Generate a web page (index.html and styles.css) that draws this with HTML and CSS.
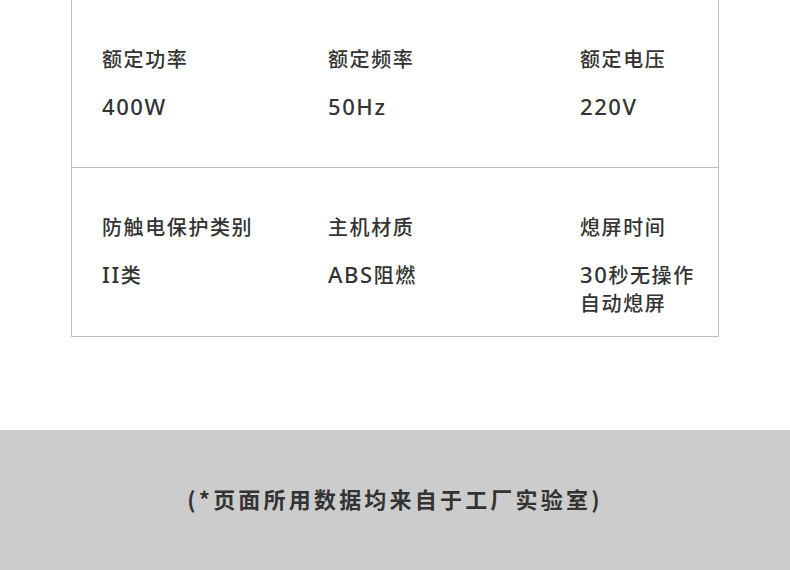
FILE: index.html
```html
<!DOCTYPE html>
<html lang="zh">
<head>
<meta charset="utf-8">
<link rel="stylesheet" href="styles.css">
</head>
<body>
<div class="page">
  <div class="spec">
    <div class="row">
      <div class="cell"><div class="label">额定功率</div><div class="value"><span class="num">400W</span></div></div>
      <div class="cell"><div class="label">额定频率</div><div class="value"><span class="num">50Hz</span></div></div>
      <div class="cell"><div class="label">额定电压</div><div class="value"><span class="num">220V</span></div></div>
    </div>
    <div class="row row-last">
      <div class="cell"><div class="label">防触电保护类别</div><div class="value"><span class="num">II</span>类</div></div>
      <div class="cell"><div class="label">主机材质</div><div class="value"><span class="num">ABS</span>阻燃</div></div>
      <div class="cell"><div class="label">熄屏时间</div><div class="value"><span class="num">30</span>秒无操作<br>自动熄屏</div></div>
    </div>
  </div>
  <div class="note">(*页面所用数据均来自于工厂实验室)</div>
</div>
</body>
</html>
```

FILE: styles.css
```css
html, body {
  margin: 0;
  padding: 0;
  background: #ffffff;
}
body {
  font-family: "Noto Sans CJK SC", "Noto Sans", sans-serif;
  color: #333333;
  width: 790px;
  height: 570px;
  overflow: hidden;
}
.page {
  display: flex;
  flex-direction: column;
}
.spec {
  margin-left: 71px;
  width: 646px;
  border-left: 1px solid #bdbdbd;
  border-right: 1px solid #bdbdbd;
}
.row {
  display: grid;
  grid-template-columns: 226px 252px 1fr;
  height: 167px;
  box-sizing: content-box;
  border-bottom: 1px solid #bdbdbd;
  padding-left: 30px;
}
.row-last {
  height: 168px;
}
.cell {
  padding-top: 45px;
  display: flex;
  flex-direction: column;
  gap: 20px;
}
.label, .value {
  font-size: 20px;
  line-height: 28px;
  font-weight: 500;
  letter-spacing: 1.6px;
  white-space: nowrap;
}
.num {
  font-family: "Noto Sans", sans-serif;
  font-size: 22px;
  line-height: 20px;
  letter-spacing: 1.6px;
}
.note {
  margin-top: 93px;
  height: 140px;
  background: #cccccc;
  display: flex;
  align-items: center;
  justify-content: center;
  font-size: 22px;
  font-weight: 700;
  letter-spacing: 3.2px;
  color: #333333;
  padding-bottom: 4px;
  box-sizing: border-box;
}
```
